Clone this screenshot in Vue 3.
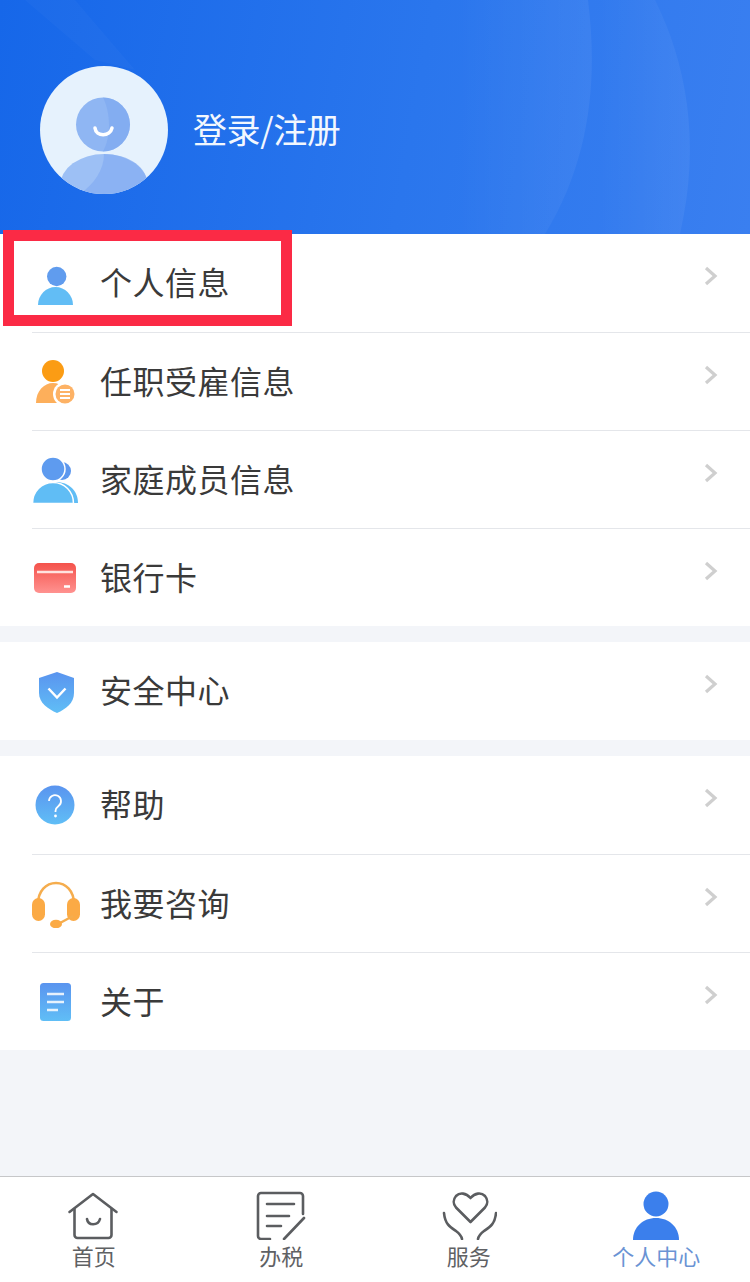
<script setup>
const groups = [
  [
    { icon: 'person', label: '个人信息' },
    { icon: 'job', label: '任职受雇信息' },
    { icon: 'family', label: '家庭成员信息' },
    { icon: 'card', label: '银行卡' }
  ],
  [{ icon: 'shield', label: '安全中心' }],
  [
    { icon: 'help', label: '帮助' },
    { icon: 'headset', label: '我要咨询' },
    { icon: 'doc', label: '关于' }
  ]
]
const tabs = [
  { icon: 'home', label: '首页' },
  { icon: 'tax', label: '办税' },
  { icon: 'service', label: '服务' },
  { icon: 'me', label: '个人中心', active: true }
]
</script>

<template>
  <div class="page">
    <svg class="defs" width="0" height="0">
      <defs>
        <linearGradient id="blue" x1="0" y1="0" x2="0" y2="1">
          <stop offset="0" stop-color="#5a94ef" />
          <stop offset="1" stop-color="#60bef6" />
        </linearGradient>
        <linearGradient id="red" x1="0" y1="0" x2="0" y2="1">
          <stop offset="0" stop-color="#f4524b" />
          <stop offset="1" stop-color="#ff9290" />
        </linearGradient>
        <linearGradient id="arc" x1="0" y1="0" x2="1" y2="0">
          <stop offset="0.3" stop-color="#fff" stop-opacity="0" />
          <stop offset="1" stop-color="#fff" stop-opacity="0.055" />
        </linearGradient>
      </defs>
    </svg>

    <header class="header">
      <svg class="arcs" width="750" height="234" viewBox="0 0 750 234">
        <path d="M588 0C598 80 590 160 545 234H400V0Z" fill="url(#arc)" />
        <path d="M655 0C685 60 702 140 680 234H560C590 160 598 80 590 0Z" fill="url(#arc)" />
        <path d="M25 0H75L135 70L95 60Z" fill="#fff" opacity="0.025" />
      </svg>
      <svg class="avatar" width="128" height="128" viewBox="0 0 128 128">
        <defs>
          <clipPath id="avatar-clip"><circle cx="64" cy="64" r="64" /></clipPath>
        </defs>
        <circle cx="64" cy="64" r="64" fill="#e6f2fd" />
        <g clip-path="url(#avatar-clip)">
          <circle cx="63" cy="58.500" r="27" fill="#8fb6f3" />
          <path d="M63 31.500a27 27 0 0 1 0 54c4-8 6-16 6-26s-2-20-6-28z" fill="#7ba7f0" opacity="0.6" />
          <ellipse cx="64" cy="120" rx="44" ry="32" fill="#9dc0f5" />
          <path d="M64 88c26 0 44 14 44 32v8H40c14-10 24-24 24-40z" fill="#7ea9f1" opacity="0.6" />
        </g>
        <path d="M55 62c1 9 15 9 17 0" fill="none" stroke="#fff" stroke-width="3.500" stroke-linecap="round" />
      </svg>
      <span class="login">登录/注册</span>
    </header>

    <main class="list">
      <section v-for="(group, g) in groups" :key="g" class="group">
        <div v-for="item in group" :key="item.label" class="row">
          <svg class="icon" width="48" height="48" viewBox="0 0 48 48">
            <template v-if="item.icon === 'person'">
              <circle cx="24.700" cy="17.500" r="9.700" fill="#609cee" />
              <path d="M6 46c0-10 8-18 17.500-18S41 36 41 46z" fill="#62bdf5" />
            </template>
            <template v-else-if="item.icon === 'job'">
              <circle cx="21" cy="13" r="11" fill="#fb9c14" />
              <path d="M4 45c0-12 8-20 17-20 9 0 17 8 17 20z" fill="#fdaf5b" />
              <circle cx="33" cy="36" r="12" fill="#fff" />
              <circle cx="33" cy="36" r="9.500" fill="#fdb265" />
              <path d="M28 32h10M28 36h10M28 40h10" stroke="#fff" stroke-width="2" />
            </template>
            <template v-else-if="item.icon === 'family'">
              <circle cx="30" cy="15" r="9" fill="#5c97ee" />
              <path d="M24 26c13 0 22 9 22 21H30z" fill="#60bdf5" />
              <circle cx="21" cy="13" r="12" fill="#5e9bef" stroke="#fff" stroke-width="1.500" />
              <path d="M0.500 47.500c0-12 9-21 20.500-21s20.500 9 20.500 21z" fill="#60bdf5" stroke="#fff" stroke-width="1.500" />
            </template>
            <template v-else-if="item.icon === 'card'">
              <rect x="2" y="9" width="42" height="30" rx="5" fill="url(#red)" />
              <path d="M5 18h36" stroke="#ffe3e0" stroke-width="2.500" />
              <path d="M32 32.500h6" stroke="#fff" stroke-width="2.500" />
            </template>
            <template v-else-if="item.icon === 'shield'">
              <path d="M25 5l17 6v15c0 10-8 16-17 20C16 42 7 36 7 26V11z" fill="url(#blue)" />
              <path d="M16.500 21.500L25 30.500l8.500-9" fill="none" stroke="#fff" stroke-width="2.500" />
            </template>
            <template v-else-if="item.icon === 'help'">
              <circle cx="23" cy="24" r="19.500" fill="url(#blue)" />
              <path d="M17 20a6 6 0 1 1 9.500 5c-2 1.500-3 2.500-3 5v1" fill="none" stroke="#fff" stroke-width="1.800" />
              <circle cx="23.500" cy="35" r="1.400" fill="#fff" />
            </template>
            <template v-else-if="item.icon === 'headset'">
              <path d="M6 24C6 11 14 3 24 3s18 8 18 21" fill="none" stroke="#f5ad4e" stroke-width="2.500" />
              <rect x="0" y="18" width="13" height="23" rx="6.500" fill="#fbaa45" />
              <rect x="35" y="18" width="13" height="23" rx="6.500" fill="#fbaa45" />
              <path d="M28 43l13-7" stroke="#f5ad4e" stroke-width="2.500" />
              <ellipse cx="24" cy="44" rx="6" ry="4.300" fill="#fbaa45" />
            </template>
            <template v-else-if="item.icon === 'doc'">
              <rect x="8" y="5" width="31" height="38" rx="3.500" fill="url(#blue)" />
              <path d="M15 16h17M15 24h17M15 32h11" stroke="#fff" stroke-width="2.300" opacity="0.85" />
            </template>
          </svg>
          <span class="label">{{ item.label }}</span>
          <svg class="chevron" width="14" height="20" viewBox="0 0 14 20">
            <path d="M2 2l9 8-9 8" fill="none" stroke="#cfcfcf" stroke-width="3.200" />
          </svg>
        </div>
      </section>
    </main>

    <nav class="tabbar">
      <div v-for="tab in tabs" :key="tab.label" class="tab" :class="{ active: tab.active }">
        <svg width="56" height="50" viewBox="0 0 56 50" fill="none" stroke="#5b5d60" stroke-width="2.600" stroke-linecap="round" stroke-linejoin="round">
          <template v-if="tab.icon === 'home'">
            <path d="M3.500 22L27 4l23.500 18" />
            <path d="M8.500 19v26a3 3 0 0 0 3 3h31a3 3 0 0 0 3-3V19" />
            <path d="M21 29c1 7 11 7 13 0" />
          </template>
          <template v-else-if="tab.icon === 'tax'">
            <path d="M50 24V6a3 3 0 0 0-3-3H8a3 3 0 0 0-3 3v40a3 3 0 0 0 3 3h9" />
            <path d="M14 14h27M14 26h22M14 36h14M31 49l20-21" />
          </template>
          <template v-else-if="tab.icon === 'service'">
            <path d="M29.500 32L15 17.500c-3-3.500-3-8 0-11.500 4-4 10-3 14.500 2 4.500-5 10.500-6 14.500-2 3 3.500 3 8 0 11.500z" />
            <path d="M3 23c1 11 6 14 12 18 4 3 5.500 5 6 8M55 23c-1 11-6 14-12 18-4 3-5.500 5-6 8" />
          </template>
          <template v-else-if="tab.icon === 'me'">
            <circle cx="28" cy="14" r="12.500" fill="#3b7fec" stroke="none" />
            <path d="M5 50c0-13 10-22 23-22s23 9 23 22z" fill="#3b7fec" stroke="none" />
          </template>
        </svg>
        <span class="tab-label">{{ tab.label }}</span>
      </div>
    </nav>

    <div class="highlight"></div>
  </div>
</template>

<style>
html, body {
  margin: 0;
  background: #f3f5f9;
}
</style>

<style scoped>
.page {
  position: relative;
  width: 750px;
  height: 1282px;
  display: flex;
  flex-direction: column;
  overflow: hidden;
  background: #f3f5f9;
  font-family: "Noto Sans CJK SC", "Liberation Sans", sans-serif;
}

.defs {
  position: absolute;
}

.header {
  position: relative;
  flex: none;
  box-sizing: border-box;
  height: 234px;
  padding: 26px 0 0 40px;
  display: flex;
  align-items: center;
  gap: 25px;
  background: linear-gradient(100deg, #1667e9 0%, #2a76ed 55%, #3a7ff0 100%);
}

.arcs {
  position: absolute;
  left: 0;
  top: 0;
}

.avatar {
  position: relative;
  flex: none;
}

.login {
  position: relative;
  padding-bottom: 4px;
  font-size: 34px;
  font-weight: 400;
  letter-spacing: -0.4px;
  color: #f2f7fe;
}

.list {
  flex: 1;
  display: flex;
  flex-direction: column;
  gap: 16px;
}

.group {
  background: #fff;
  padding-left: 32px;
}

.row {
  box-sizing: border-box;
  height: 98px;
  position: relative;
  display: flex;
  align-items: center;
  gap: 20px;
}

.row + .row {
  border-top: 1px solid #e4e6ea;
}

.icon {
  flex: none;
}

.label {
  flex: 1;
  padding-bottom: 4px;
  font-size: 32px;
  font-weight: 400;
  letter-spacing: 0.5px;
  color: #3a3a3a;
}

.chevron {
  flex: none;
  margin: -14px 32px 0 0;
}

.tabbar {
  flex: none;
  box-sizing: border-box;
  height: 106px;
  border-top: 1px solid #c6c7c9;
  background: #fff;
  display: grid;
  grid-template-columns: repeat(4, 1fr);
}

.tab {
  display: flex;
  flex-direction: column;
  align-items: center;
  padding-top: 13px;
}

.tab-label {
  margin-top: -1px;
  font-size: 22px;
  line-height: 32px;
  color: #5f6164;
}

.tab.active .tab-label {
  color: #6a93d4;
}

.highlight {
  position: absolute;
  left: 3px;
  top: 230px;
  box-sizing: border-box;
  width: 289px;
  height: 96px;
  border: 11px solid #fb2a45;
}
</style>
